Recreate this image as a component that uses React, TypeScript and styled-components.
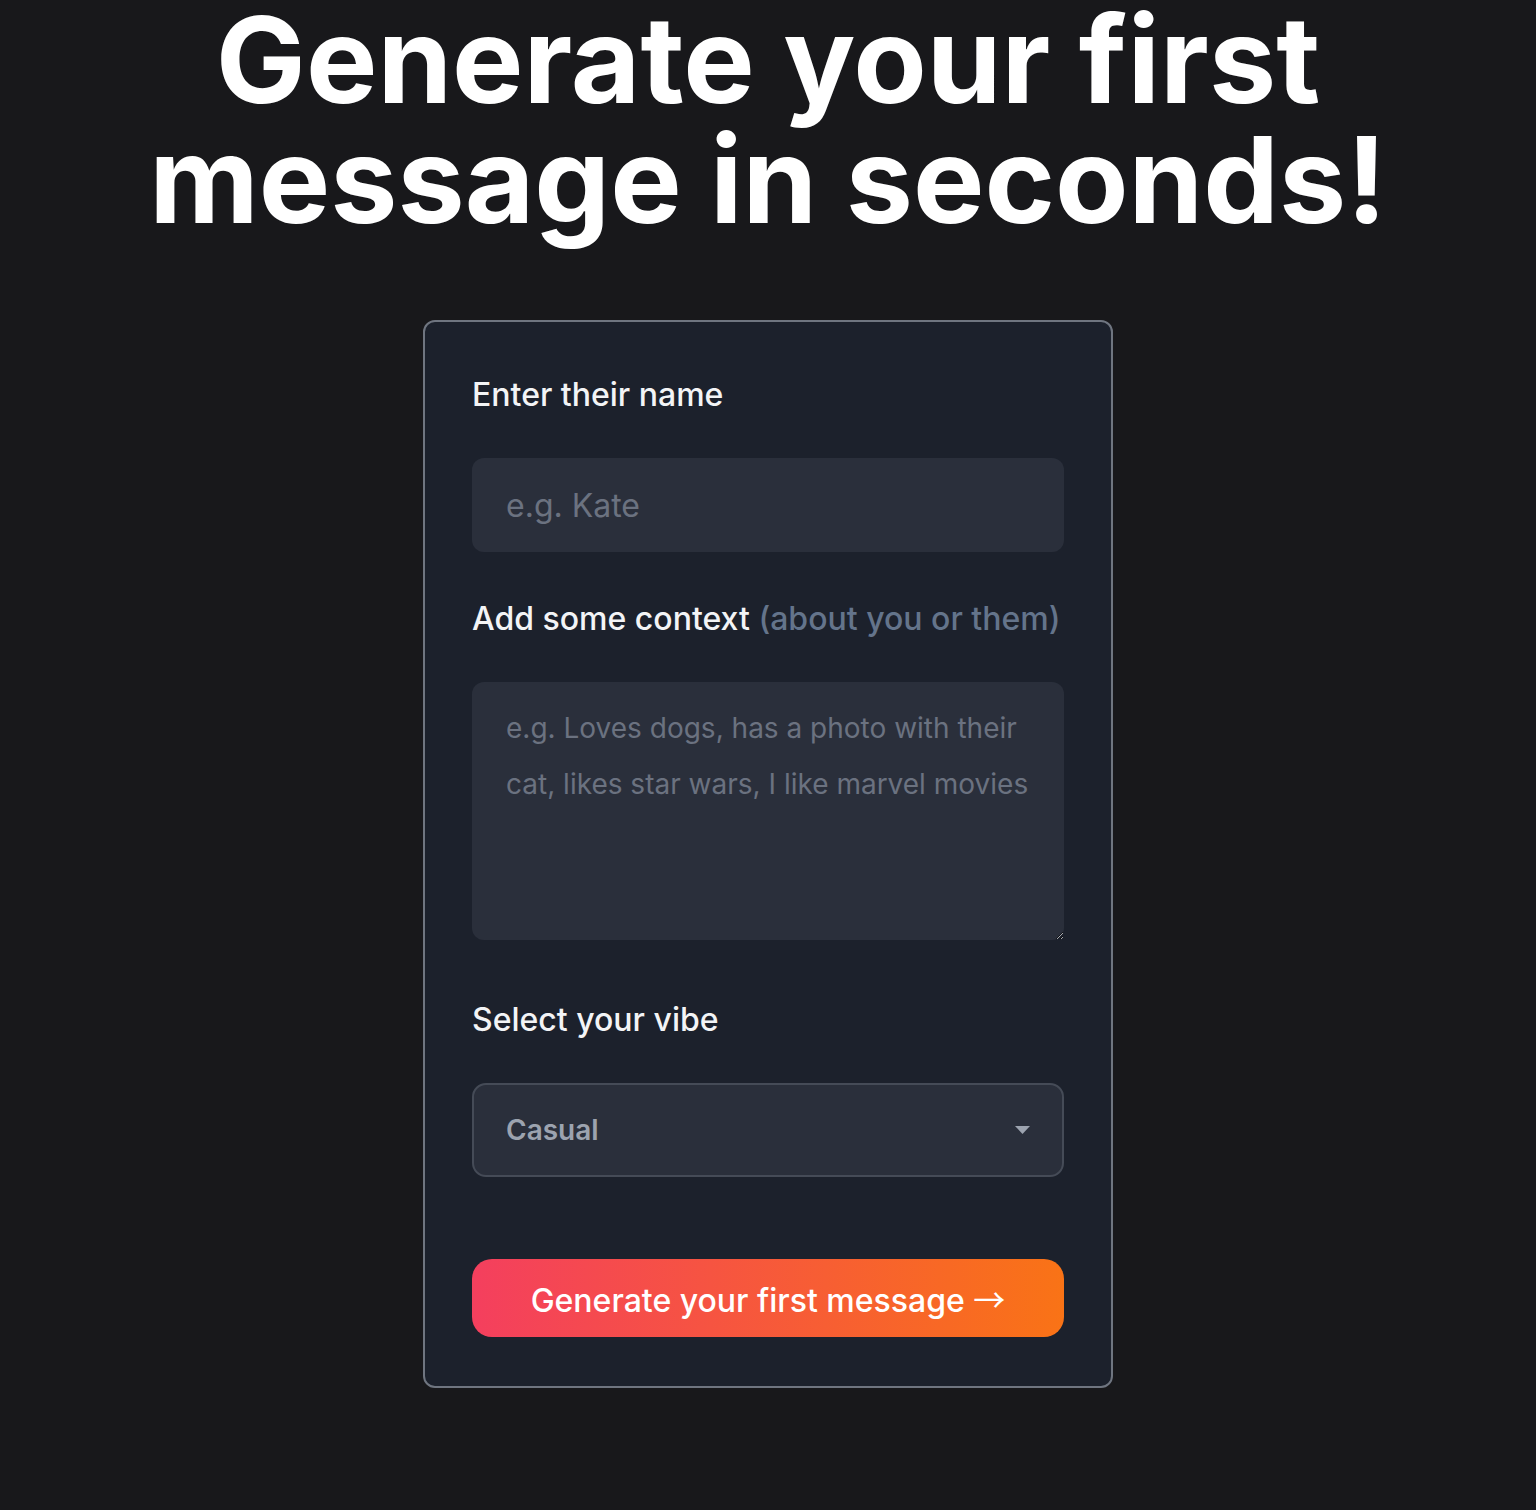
import React from "react";
import styled, { createGlobalStyle } from "styled-components";

const GlobalStyle = createGlobalStyle`
  html, body {
    margin: 0;
    padding: 0;
    background: #18181b;
  }
  body {
    font-family: Inter, "Noto Sans", sans-serif;
    color: #f3f4f6;
  }
  * { box-sizing: border-box; }
`;

const Page = styled.main`
  display: flex;
  flex-direction: column;
  align-items: center;
  min-height: 1510px;
`;

const Title = styled.h1`
  margin: 0;
  font-family: Inter, sans-serif;
  font-size: 120px;
  line-height: 1;
  font-weight: 700;
  letter-spacing: 0;
  color: #ffffff;
  text-align: center;
`;

const Card = styled.form`
  margin-top: 80px;
  width: 690px;
  padding: 47px 47px 49px;
  background: #1c212c;
  border: 2px solid #6f7580;
  border-radius: 12px;
  display: flex;
  flex-direction: column;
  gap: 41px;
`;

const Field = styled.div<{ $after?: number }>`
  display: flex;
  flex-direction: column;
  gap: 39px;
  margin-bottom: ${(p) => p.$after ?? 0}px;
`;

const Label = styled.label`
  padding-top: 2px;
  font-size: 32px;
  line-height: 48px;
  font-weight: 500;
  color: #f3f4f6;
  white-space: nowrap;
`;

const Hint = styled.span`
  font-weight: 500;
  color: #64748b;
`;

const TextInput = styled.input`
  display: block;
  width: 100%;
  height: 94px;
  padding: 0 34px;
  border: none;
  outline: none;
  border-radius: 12px;
  background: #2a2f3b;
  color: #e5e7eb;
  font-family: Inter, sans-serif;
  font-size: 32px;
  &::placeholder { color: #6b7280; }
`;

const TextArea = styled.textarea`
  display: block;
  width: 100%;
  height: 258px;
  padding: 18px 34px;
  border: none;
  outline: none;
  border-radius: 12px;
  background: #2a2f3b;
  color: #e5e7eb;
  font-family: Inter, sans-serif;
  font-size: 28px;
  line-height: 56px;
  resize: vertical;
  &::placeholder { color: #6b7280; }
`;

const SelectWrap = styled.div`
  position: relative;
`;

const Select = styled.select`
  display: block;
  width: 100%;
  height: 94px;
  padding: 0 32px;
  appearance: none;
  border: 2px solid #454b57;
  border-radius: 14px;
  background: #2a2f3b;
  color: #9ca3af;
  font-family: Inter, sans-serif;
  font-size: 28px;
  font-weight: 600;
  outline: none;
`;

const Caret = styled.svg`
  position: absolute;
  right: 34px;
  top: 50%;
  transform: translateY(-50%);
  pointer-events: none;
`;

const Button = styled.button`
  margin-top: 41px;
  height: 78px;
  width: 100%;
  border: none;
  border-radius: 20px;
  background: linear-gradient(to right, #f43f5e, #f97316);
  color: #ffffff;
  font-family: Inter, sans-serif;
  font-size: 32px;
  font-weight: 500;
  cursor: pointer;
`;

const Arrow = styled.span`
  font-family: "Noto Sans CJK SC", "Noto Sans CJK JP", sans-serif;
  font-weight: 400;
`;

export default function App() {
  return (
    <>
      <GlobalStyle />
      <Page>
        <Title>
          Generate your first
          <br />
          message in seconds!
        </Title>
        <Card onSubmit={(e) => e.preventDefault()}>
          <Field>
            <Label htmlFor="name">Enter their name</Label>
            <TextInput id="name" placeholder="e.g. Kate" />
          </Field>
          <Field $after={13}>
            <Label htmlFor="context">
              Add some context <Hint>(about you or them)</Hint>
            </Label>
            <TextArea
              id="context"
              placeholder="e.g. Loves dogs, has a photo with their cat, likes star wars, I like marvel movies"
            />
          </Field>
          <Field>
            <Label htmlFor="vibe">Select your vibe</Label>
            <SelectWrap>
              <Select id="vibe" defaultValue="Casual">
                <option>Casual</option>
                <option>Flirty</option>
                <option>Funny</option>
              </Select>
              <Caret width="15" height="8" viewBox="0 0 15 8">
                <path d="M0 0 L15 0 L7.5 8 Z" fill="#9ca3af" />
              </Caret>
            </SelectWrap>
          </Field>
          <Button type="submit">
            Generate your first message <Arrow>→</Arrow>
          </Button>
        </Card>
      </Page>
    </>
  );
}
